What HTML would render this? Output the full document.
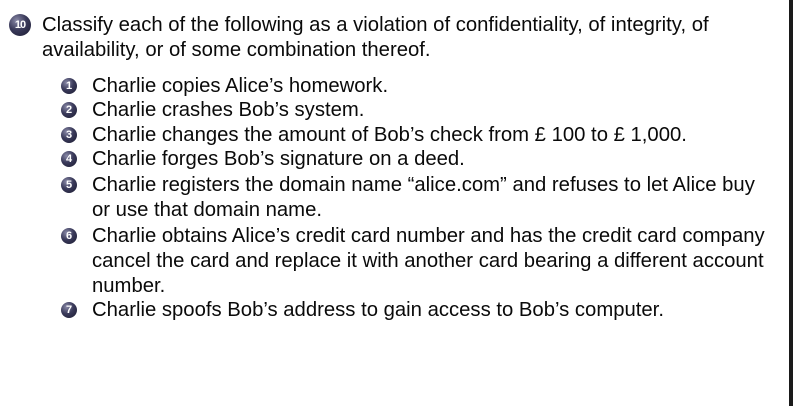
<!DOCTYPE html>
<html><head><meta charset="utf-8"><style>
body{margin:0;width:793px;height:406px;background:#fff;position:relative;overflow:hidden;font-family:"Liberation Sans",Arial,sans-serif;font-size:20.3px;color:#0a0a0a;}
.l{position:absolute;white-space:nowrap;line-height:24px;height:24px;}
.b{position:absolute;border-radius:50%;background:radial-gradient(circle at 35% 30%,#8a8aa8 0%,#3a3a5a 45%,#1a1a30 100%);color:#fff;font-weight:bold;text-align:center;}
.s{width:16px;height:16px;font-size:11px;line-height:16px;}
.bar{position:absolute;left:789px;top:0;width:4px;height:406px;background:#1a1a1a;}
</style></head><body>
<div class="b" style="left:9px;top:14px;width:22px;height:22px;font-size:11px;line-height:22px;letter-spacing:-1px;">10</div>
<div class="l" style="left:42px;top:13px;">Classify each of the following as a violation of confidentiality, of integrity, of</div>
<div class="l" style="left:42px;top:38px;">availability, or of some combination thereof.</div>
<div class="b s" style="left:61px;top:78px;">1</div>
<div class="l" style="left:92px;top:74px;">Charlie copies Alice’s homework.</div>
<div class="b s" style="left:61px;top:102px;">2</div>
<div class="l" style="left:92px;top:98px;">Charlie crashes Bob’s system.</div>
<div class="b s" style="left:61px;top:127px;">3</div>
<div class="l" style="left:92px;top:123px;">Charlie changes the amount of Bob’s check from £ 100 to £ 1,000.</div>
<div class="b s" style="left:61px;top:151px;">4</div>
<div class="l" style="left:92px;top:147px;">Charlie forges Bob’s signature on a deed.</div>
<div class="b s" style="left:61px;top:177px;">5</div>
<div class="l" style="left:92px;top:173px;">Charlie registers the domain name “alice.com” and refuses to let Alice buy</div>
<div class="l" style="left:92px;top:198px;">or use that domain name.</div>
<div class="b s" style="left:61px;top:228px;">6</div>
<div class="l" style="left:92px;top:224px;">Charlie obtains Alice’s credit card number and has the credit card company</div>
<div class="l" style="left:92px;top:249px;">cancel the card and replace it with another card bearing a different account</div>
<div class="l" style="left:92px;top:274px;">number.</div>
<div class="b s" style="left:61px;top:302px;">7</div>
<div class="l" style="left:92px;top:298px;">Charlie spoofs Bob’s address to gain access to Bob’s computer.</div>
<div class="bar"></div>
</body></html>
